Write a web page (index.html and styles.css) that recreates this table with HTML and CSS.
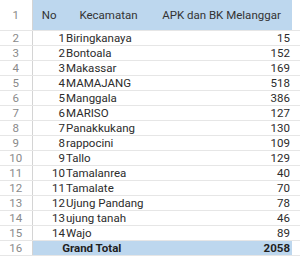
FILE: index.html
```html
<!DOCTYPE html>
<html>
<head>
<meta charset="utf-8">
<link rel="stylesheet" href="styles.css">
</head>
<body>
<table class="sheet">
  <colgroup>
    <col class="c-rh"><col class="c-no"><col class="c-kec"><col class="c-val"><col class="c-rest">
  </colgroup>
  <tr class="head">
    <td class="rh">1</td><td class="hd hc-no">No</td><td class="hd hc-kec">Kecamatan</td><td class="hd hc-val">APK dan BK Melanggar</td><td class="rest"></td>
  </tr>
  <tr><td class="rh">2</td><td class="no">1</td><td class="kec">Biringkanaya</td><td class="val">15</td><td class="rest"></td></tr>
  <tr><td class="rh">3</td><td class="no">2</td><td class="kec">Bontoala</td><td class="val">152</td><td class="rest"></td></tr>
  <tr><td class="rh">4</td><td class="no">3</td><td class="kec">Makassar</td><td class="val">169</td><td class="rest"></td></tr>
  <tr><td class="rh">5</td><td class="no">4</td><td class="kec">MAMAJANG</td><td class="val">518</td><td class="rest"></td></tr>
  <tr><td class="rh">6</td><td class="no">5</td><td class="kec">Manggala</td><td class="val">386</td><td class="rest"></td></tr>
  <tr><td class="rh">7</td><td class="no">6</td><td class="kec">MARISO</td><td class="val">127</td><td class="rest"></td></tr>
  <tr><td class="rh">8</td><td class="no">7</td><td class="kec">Panakkukang</td><td class="val">130</td><td class="rest"></td></tr>
  <tr><td class="rh">9</td><td class="no">8</td><td class="kec">rappocini</td><td class="val">109</td><td class="rest"></td></tr>
  <tr><td class="rh">10</td><td class="no">9</td><td class="kec">Tallo</td><td class="val">129</td><td class="rest"></td></tr>
  <tr><td class="rh">11</td><td class="no">10</td><td class="kec">Tamalanrea</td><td class="val">40</td><td class="rest"></td></tr>
  <tr><td class="rh">12</td><td class="no">11</td><td class="kec">Tamalate</td><td class="val">70</td><td class="rest"></td></tr>
  <tr><td class="rh">13</td><td class="no">12</td><td class="kec">Ujung Pandang</td><td class="val">78</td><td class="rest"></td></tr>
  <tr><td class="rh">14</td><td class="no">13</td><td class="kec">ujung tanah</td><td class="val">46</td><td class="rest"></td></tr>
  <tr><td class="rh">15</td><td class="no">14</td><td class="kec">Wajo</td><td class="val">89</td><td class="rest"></td></tr>
  <tr class="total"><td class="rh">16</td><td class="tot-label" colspan="2">Grand Total</td><td class="val tot-val">2058</td><td class="rest"></td></tr>
</table>
</body>
</html>
```
FILE: styles.css
```css
html, body {
  margin: 0;
  padding: 0;
  background: #ffffff;
}
body {
  font-family: Roboto, "Noto Sans", sans-serif;
  font-size: 11.5px;
  color: #2b2b2b;
}
.sheet {
  border-collapse: collapse;
  table-layout: fixed;
  width: 300px;
}
.c-rh { width: 32px; }
.c-no { width: 34px; }
.c-kec { width: 85px; }
.c-val { width: 141px; }
.c-rest { width: 8px; }
.sheet td {
  height: 15px;
  padding: 0 2px;
  border-bottom: 1px solid #e6e6e6;
  white-space: nowrap;
  overflow: hidden;
  line-height: 14px;
  box-sizing: border-box;
}
.sheet tr.head td {
  height: 30px;
}
.sheet td.rh {
  text-align: center;
  color: #8a8a8a;
  border-right: 1px solid #d4d4d4;
  padding: 0;
}
.hd {
  background: #bdd7ee;
  text-align: center;
  color: #333;
}
.hc-no { text-align: center; }
.no {
  text-align: right;
  padding-right: 1px !important;
}
.kec {
  text-align: left;
  padding-left: 0 !important;
}
.val {
  text-align: right;
  padding-right: 2px !important;
}
.total td.tot-label,
.total td.tot-val {
  background: #bdd7ee;
  font-weight: bold;
  color: #1f1f1f;
}
.tot-label {
  text-align: center;
}
```
